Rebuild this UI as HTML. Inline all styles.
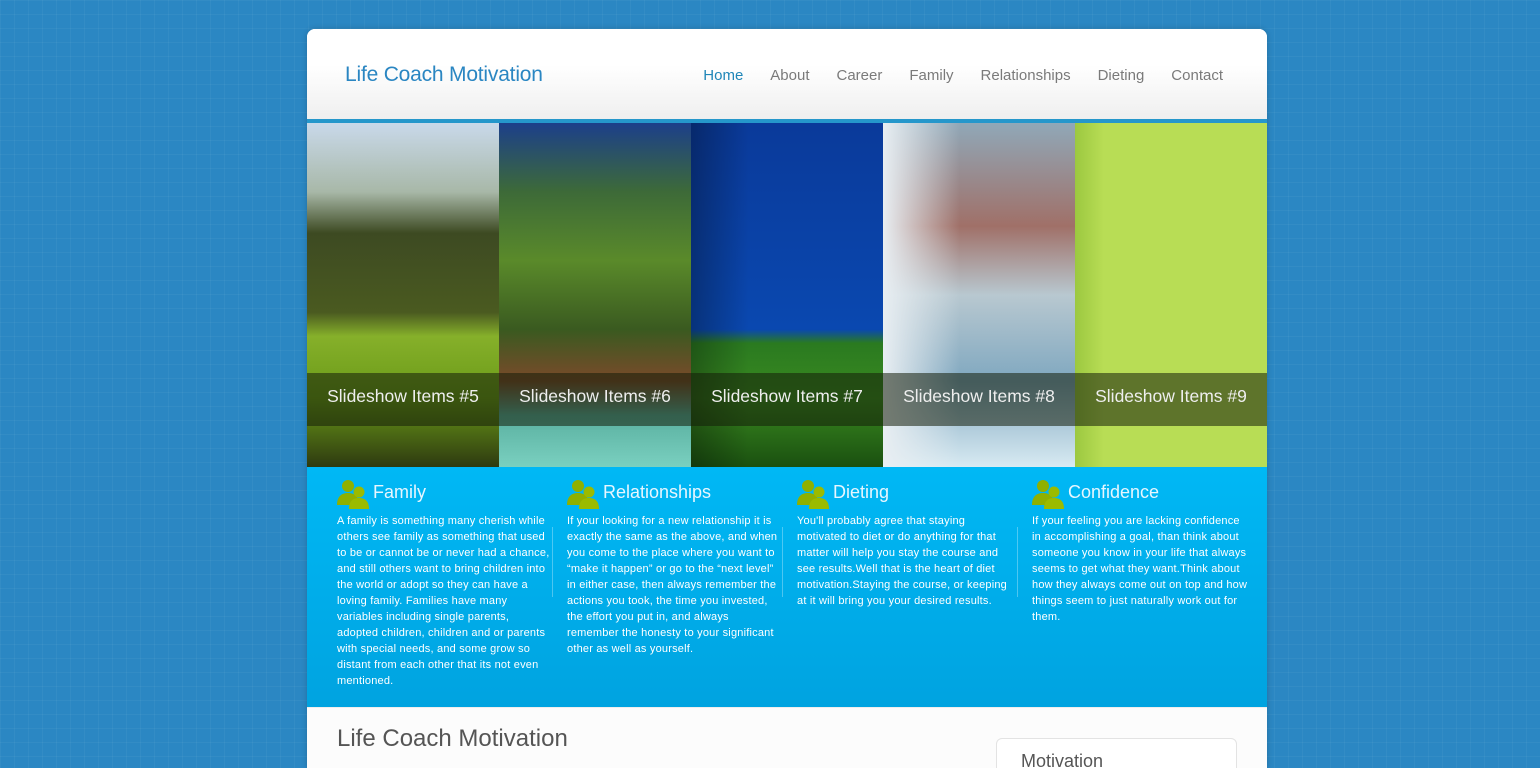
<!DOCTYPE html>
<html><head><meta charset="utf-8"><style>
*{margin:0;padding:0;box-sizing:border-box}
html,body{width:1540px;height:768px;overflow:hidden}
body{background:#2b87c3;background-image:linear-gradient(rgba(255,255,255,.04) 1px,transparent 1px),linear-gradient(90deg,rgba(255,255,255,.04) 1px,transparent 1px);background-size:14px 14px;font-family:"Liberation Sans",sans-serif;position:relative}
#wrap{position:absolute;left:307px;top:29px;width:960px;height:739px;background:#fff;border-radius:8px 8px 0 0;overflow:hidden;box-shadow:0 0 6px rgba(0,0,0,.2)}
#hdr{background:linear-gradient(#fff 40%,#efefef);border-bottom:4px solid #2597cb;height:94px;position:relative}
.logo{position:absolute;left:38px;top:34px;font-size:21px;color:#2a86c2;letter-spacing:-.2px}
.nav{position:absolute;right:44px;top:38px;font-size:15px;color:#7a7a7a}
.nav span{margin-left:27px}
.nav span:first-child{color:#1f86b8}
#slides{height:344px;display:flex;position:relative}
.s{width:192px;height:344px;position:relative}
.cap{position:absolute;left:0;top:250px;width:192px;height:53px;background:rgba(20,30,10,.55);color:#eee;font-size:17.5px;line-height:46px;text-align:center}
#feat{height:240px;background:linear-gradient(#00b8f5,#00a3e0);position:relative;color:#fff}
.f{position:absolute;top:12px;width:220px}
.f h3{font-weight:normal;font-size:18px;color:#e6f6ff;height:34px;line-height:26px;padding-left:36px;position:relative}
.f h3 svg{position:absolute;left:0;top:0}
.f p{font-size:11px;line-height:16px;font-weight:normal;letter-spacing:.2px;width:216px}
.sep{position:absolute;top:60px;width:1px;height:70px;background:rgba(255,255,255,.3)}
#main{position:absolute;top:678px;left:0;width:960px;height:80px;background:#fcfcfc;border-top:1px solid #eee}
#main h1{position:absolute;left:30px;top:17px;font-weight:normal;font-size:24px;color:#555}
.side{position:absolute;left:689px;top:30px;width:241px;height:60px;border:1px solid #e3e3e3;border-radius:6px;background:#fff;font-size:18px;color:#555;padding:12px 24px}
</style></head><body>
<div id="wrap">
<div id="hdr"><div class="logo">Life Coach Motivation</div>
<div class="nav"><span>Home</span><span>About</span><span>Career</span><span>Family</span><span>Relationships</span><span>Dieting</span><span>Contact</span></div></div>
<div id="slides">
<div class="s" style="background:linear-gradient(#c9d9ea 0%,#a8b8a8 20%,#3d4a22 32%,#4a5a20 55%,#86b02a 62%,#6a9a18 80%,#2e3a10)"><div class="cap">Slideshow Items #5</div></div>
<div class="s" style="background:linear-gradient(#1c3f8a 0%,#3d6a38 20%,#5a8a2a 40%,#3a5a20 60%,#7a4a2a 75%,#5ab0a0 85%,#7ad0c0)"><div class="cap">Slideshow Items #6</div></div>
<div class="s" style="background:linear-gradient(90deg,rgba(0,0,0,.3),transparent 30%),linear-gradient(#0a3a9a 0%,#0a48b0 60%,#2a7a20 64%,#3a8a20 80%,#1a5010)"><div class="cap">Slideshow Items #7</div></div>
<div class="s" style="background:linear-gradient(90deg,#e8eef2,transparent 40%),linear-gradient(#90a8b8 0%,#a07068 30%,#b8c8d0 50%,#80a8c0 75%,#d8eaf2)"><div class="cap">Slideshow Items #8</div></div>
<div class="s" style="background:linear-gradient(90deg,#9cc840,#b8dd55 15%)"><div class="cap">Slideshow Items #9</div></div>
</div>
<div id="feat">
<div class="f" style="left:30px"><h3><svg width="34" height="30" viewBox="0 0 34 30"><circle cx="11" cy="7" r="6" fill="#8fb000"/><path d="M0 26c0-9 5-12 11-12s11 3 11 12z" fill="#8fb000"/><circle cx="22" cy="13" r="5.5" fill="#9bbb00"/><path d="M12 30c0-8 4-11 10-11s10 3 10 11z" fill="#9bbb00"/></svg>Family</h3><p>A family is something many cherish while others see family as something that used to be or cannot be or never had a chance, and still others want to bring children into the world or adopt so they can have a loving family. Families have many variables including single parents, adopted children, children and or parents with special needs, and some grow so distant from each other that its not even mentioned.</p></div>
<div class="sep" style="left:245px"></div>
<div class="f" style="left:260px"><h3><svg width="34" height="30" viewBox="0 0 34 30"><circle cx="11" cy="7" r="6" fill="#8fb000"/><path d="M0 26c0-9 5-12 11-12s11 3 11 12z" fill="#8fb000"/><circle cx="22" cy="13" r="5.5" fill="#9bbb00"/><path d="M12 30c0-8 4-11 10-11s10 3 10 11z" fill="#9bbb00"/></svg>Relationships</h3><p>If your looking for a new relationship it is exactly the same as the above, and when you come to the place where you want to “make it happen” or go to the “next level” in either case, then always remember the actions you took, the time you invested, the effort you put in, and always remember the honesty to your significant other as well as yourself.</p></div>
<div class="sep" style="left:475px"></div>
<div class="f" style="left:490px"><h3><svg width="34" height="30" viewBox="0 0 34 30"><circle cx="11" cy="7" r="6" fill="#8fb000"/><path d="M0 26c0-9 5-12 11-12s11 3 11 12z" fill="#8fb000"/><circle cx="22" cy="13" r="5.5" fill="#9bbb00"/><path d="M12 30c0-8 4-11 10-11s10 3 10 11z" fill="#9bbb00"/></svg>Dieting</h3><p>You'll probably agree that staying motivated to diet or do anything for that matter will help you stay the course and see results.Well that is the heart of diet motivation.Staying the course, or keeping at it will bring you your desired results.</p></div>
<div class="sep" style="left:710px"></div>
<div class="f" style="left:725px"><h3><svg width="34" height="30" viewBox="0 0 34 30"><circle cx="11" cy="7" r="6" fill="#8fb000"/><path d="M0 26c0-9 5-12 11-12s11 3 11 12z" fill="#8fb000"/><circle cx="22" cy="13" r="5.5" fill="#9bbb00"/><path d="M12 30c0-8 4-11 10-11s10 3 10 11z" fill="#9bbb00"/></svg>Confidence</h3><p>If your feeling you are lacking confidence in accomplishing a goal, than think about someone you know in your life that always seems to get what they want.Think about how they always come out on top and how things seem to just naturally work out for them.</p></div>
</div>
<div id="main"><h1>Life Coach Motivation</h1><div class="side">Motivation</div></div>
</div>
</body></html>
